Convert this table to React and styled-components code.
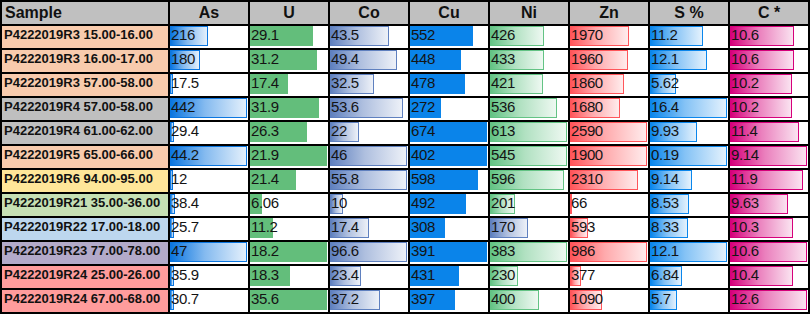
import React from 'react';
import styled, { createGlobalStyle } from 'styled-components';

const GlobalStyle = createGlobalStyle`
  body {
    margin: 0;
    background: #fff;
    font-family: "Liberation Sans", Arial, sans-serif;
  }
`;

const sampleColors = {
  peach: '#f8cbad',
  gray: '#bfbfbf',
  yellow: '#ffe699',
  green: '#c6e0b4',
  blue: '#bdd7ee',
  purple: '#b3aac9',
  red: '#ff9c9c',
};

// bar kinds: fill colour, whether it is a gradient with a border
const barKinds = {
  as: { color: '#0b76e0', gradient: true },
  u: { color: '#63be7b', gradient: false },
  co: { color: '#5f80bf', gradient: true },
  cu: { color: '#0a84ea', gradient: false },
  ni: { color: '#63c384', gradient: true },
  zn: { color: '#ff555a', gradient: true },
  s: { color: '#0a86ec', gradient: true },
  c: { color: '#d6007b', gradient: true },
};

const columns = [
  { title: 'As', kind: 'as' },
  { title: 'U', kind: 'u' },
  { title: 'Co', kind: 'co' },
  { title: 'Cu', kind: 'cu' },
  { title: 'Ni', kind: 'ni' },
  { title: 'Zn', kind: 'zn' },
  { title: 'S %', kind: 's' },
  { title: 'C *', kind: 'c' },
];

// each value: [text, bar width in px, optional bar kind]
const rows = [
  { sample: 'P4222019R3 15.00-16.00', tone: 'peach', values: [['216', 38], ['29.1', 63], ['43.5', 59], ['552', 63], ['426', 54], ['1970', 59], ['11.2', 53], ['10.6', 64]] },
  { sample: 'P4222019R3 16.00-17.00', tone: 'peach', values: [['180', 30], ['31.2', 67], ['49.4', 67], ['448', 51], ['433', 54], ['1960', 58], ['12.1', 57], ['10.6', 64]] },
  { sample: 'P4222019R3 57.00-58.00', tone: 'peach', values: [['17.5', 3], ['17.4', 38], ['32.5', 44], ['478', 55], ['421', 53], ['1860', 54], ['5.62', 26], ['10.2', 62]] },
  { sample: 'P4222019R4 57.00-58.00', tone: 'gray', values: [['442', 77], ['31.9', 69], ['53.6', 73], ['272', 31], ['536', 67], ['1680', 50], ['16.4', 77], ['10.2', 62]] },
  { sample: 'P4222019R4 61.00-62.00', tone: 'gray', values: [['29.4', 4], ['26.3', 57], ['22', 29], ['674', 77], ['613', 77], ['2590', 77], ['9.93', 47], ['11.4', 69]] },
  { sample: 'P4222019R5 65.00-66.00', tone: 'peach', values: [['44.2', 77], ['21.9', 77], ['46', 77], ['402', 77], ['545', 77], ['1900', 77], ['0.19', 77], ['9.14', 77]] },
  { sample: 'P4222019R6 94.00-95.00', tone: 'yellow', values: [['12', 3], ['21.4', 46], ['55.8', 77], ['598', 68], ['596', 74], ['2310', 68], ['9.14', 42], ['11.9', 73]] },
  { sample: 'P4222019R21 35.00-36.00', tone: 'green', values: [['38.4', 5], ['6.06', 12], ['10', 13], ['492', 56], ['201', 25], ['66', 2], ['8.53', 39], ['9.63', 58]] },
  { sample: 'P4222019R22 17.00-18.00', tone: 'blue', values: [['25.7', 4], ['11.2', 23], ['17.4', 39], ['308', 35], ['170', 38, 'co'], ['593', 18], ['8.33', 38], ['10.3', 63]] },
  { sample: 'P4222019R23 77.00-78.00', tone: 'purple', values: [['47', 77], ['18.2', 77], ['96.6', 77], ['391', 77], ['383', 77], ['986', 77], ['12.1', 77], ['10.6', 77]] },
  { sample: 'P4222019R24 25.00-26.00', tone: 'red', values: [['35.9', 4], ['18.3', 40], ['23.4', 31], ['431', 49], ['230', 28], ['377', 11], ['6.84', 32], ['10.4', 63]] },
  { sample: 'P4222019R24 67.00-68.00', tone: 'red', values: [['30.7', 4], ['35.6', 77], ['37.2', 50], ['397', 45], ['400', 49], ['1090', 32], ['5.7', 27], ['12.6', 77]] },
];

const Sheet = styled.div`
  display: grid;
  grid-template-columns: 166px repeat(8, 78px);
  grid-auto-rows: 22px;
  gap: 2px;
  padding: 2px;
  width: max-content;
  background: #000;
`;

const HeadCell = styled.div`
  background: #c0c0c0;
  color: #111;
  font-size: 16px;
  font-weight: bold;
  line-height: 22px;
  text-align: ${(p) => (p.$left ? 'left' : 'center')};
  padding-left: ${(p) => (p.$left ? '3px' : '0')};
`;

const SampleCell = styled.div`
  background: ${(p) => sampleColors[p.$tone]};
  color: #111;
  font-size: 13px;
  font-weight: bold;
  line-height: 17px;
  padding-left: 2px;
  white-space: nowrap;
`;

const ValueCell = styled.div`
  position: relative;
  background: #fff;
  overflow: hidden;
`;

const Bar = styled.div`
  position: absolute;
  left: 0;
  top: 0;
  height: 20px;
  box-sizing: border-box;
  background: ${(p) =>
    p.$gradient
      ? `linear-gradient(to right, ${p.$color} 0%, ${p.$color}80 45%, ${p.$color}1c 100%)`
      : p.$color};
  border: ${(p) => (p.$gradient ? `1px solid ${p.$color}` : 'none')};
`;

const Value = styled.span`
  position: relative;
  display: block;
  padding-left: 1px;
  font-size: 15px;
  line-height: 17px;
  letter-spacing: -0.4px;
  color: #141414;
`;

const App = () => {
  return (
    <>
      <GlobalStyle />
      <Sheet>
        <HeadCell $left>Sample</HeadCell>
        {columns.map((col) => (
          <HeadCell key={col.title}>{col.title}</HeadCell>
        ))}
        {rows.map((row) => (
          <React.Fragment key={row.sample}>
            <SampleCell $tone={row.tone}>{row.sample}</SampleCell>
            {row.values.map(([text, width, override], i) => {
              const kind = barKinds[override || columns[i].kind];
              return (
                <ValueCell key={columns[i].title}>
                  <Bar $color={kind.color} $gradient={kind.gradient} style={{ width }} />
                  <Value>{text}</Value>
                </ValueCell>
              );
            })}
          </React.Fragment>
        ))}
      </Sheet>
    </>
  );
};

export default App;
